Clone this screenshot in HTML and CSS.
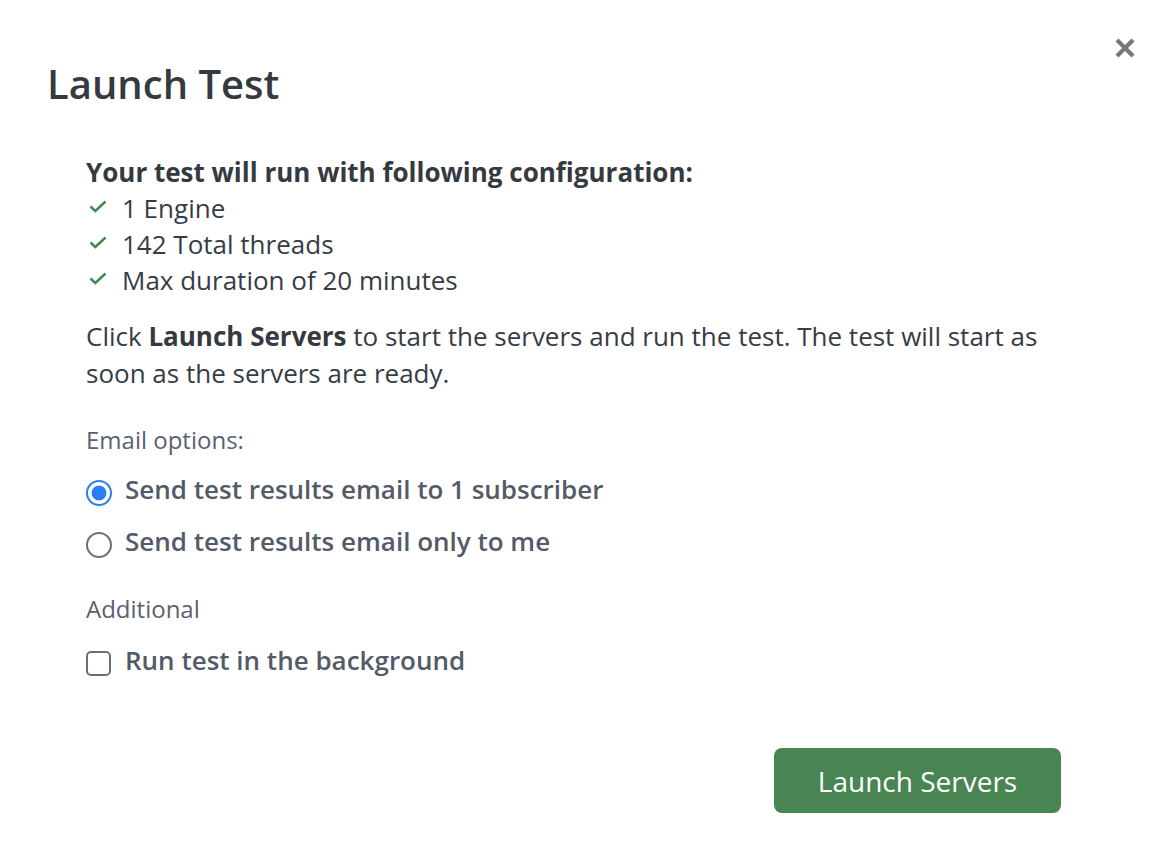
FILE: index.html
```html
<!DOCTYPE html>
<html lang="en">
<head>
<meta charset="utf-8">
<title>Launch Test</title>
<link rel="stylesheet" href="styles.css">
</head>
<body>
<div class="modal">
  <button class="close" aria-label="Close">
    <svg width="22" height="22" viewBox="0 0 22 22"><path d="M3 3 L19 19 M19 3 L3 19" stroke="#777" stroke-width="4.2" stroke-linecap="butt"/></svg>
  </button>
  <h1 class="title">Launch Test</h1>
  <div class="body">
    <div class="config-head">Your test will run with following configuration:</div>
    <ul class="config-list">
      <li><span class="check"><svg width="18" height="13" viewBox="0 0 18 13"><path d="M1.5 6.5 L6.3 11 L16.5 1.5" fill="none" stroke="#3c8a4f" stroke-width="2.4"/></svg></span>1 Engine</li>
      <li><span class="check"><svg width="18" height="13" viewBox="0 0 18 13"><path d="M1.5 6.5 L6.3 11 L16.5 1.5" fill="none" stroke="#3c8a4f" stroke-width="2.4"/></svg></span>142 Total threads</li>
      <li><span class="check"><svg width="18" height="13" viewBox="0 0 18 13"><path d="M1.5 6.5 L6.3 11 L16.5 1.5" fill="none" stroke="#3c8a4f" stroke-width="2.4"/></svg></span>Max duration of 20 minutes</li>
    </ul>
    <p class="desc">Click <strong>Launch Servers</strong> to start the servers and run the test. The test will start as soon as the servers are ready.</p>
    <div class="group-label">Email options:</div>
    <label class="option"><span class="radio checked"></span>Send test results email to 1 subscriber</label>
    <label class="option"><span class="radio"></span>Send test results email only to me</label>
    <div class="group-label additional">Additional</div>
    <label class="option"><span class="checkbox"></span>Run test in the background</label>
  </div>
  <div class="footer">
    <button class="launch">Launch Servers</button>
  </div>
</div>
</body>
</html>
```

FILE: styles.css
```css
* { box-sizing: border-box; }
html, body { margin: 0; padding: 0; background: #fff; }
body {
  font-family: "Open Sans", "Noto Sans", sans-serif;
  color: #343a44;
  width: 1158px;
  height: 842px;
  overflow: hidden;
}
.modal {
  position: relative;
  padding: 58px 0 0 0;
}
.close {
  position: absolute;
  top: 37px;
  left: 1114px;
  width: 22px;
  height: 22px;
  padding: 0;
  border: 0;
  background: none;
  cursor: pointer;
  display: block;
}
.close svg { display: block; }
.title {
  margin: 0 0 0 47px;
  font-size: 40px;
  line-height: 52px;
  font-weight: 600;
  color: #353a40;
}
.body {
  padding: 44px 98px 0 86px;
}
.config-head {
  font-size: 26px;
  line-height: 36px;
  font-weight: 700;
  color: #343a40;
}
.config-list {
  list-style: none;
  margin: 0;
  padding: 0;
}
.config-list li {
  display: flex;
  align-items: center;
  font-size: 26px;
  line-height: 36px;
  color: #363c46;
}
.check {
  display: inline-flex;
  width: 36px;
  padding-left: 3px;
  padding-bottom: 4px;
}
.check svg { display: block; }
.desc {
  margin: 20px 0 0 0;
  font-size: 26px;
  line-height: 37px;
  color: #363c46;
}
.desc strong { font-weight: 700; color: #343a40; }
.group-label {
  margin-top: 33px;
  font-size: 24px;
  line-height: 30px;
  color: #5a6170;
}
.group-label.additional { margin-top: 27px; }
.option {
  display: flex;
  align-items: center;
  height: 52px;
  font-size: 26px;
  font-weight: 600;
  color: #535a68;
}
.group-label + .option { margin-top: 8px; }
.group-label.additional + .option { margin-top: 10px; }
.radio {
  width: 26px;
  height: 26px;
  border-radius: 50%;
  border: 2px solid #6f6f6f;
  margin-right: 13px;
  margin-top: 8px;
  flex: none;
  background: #fff;
}
.radio.checked {
  border: 2.5px solid #2b7df6;
  background: radial-gradient(circle, #2b7df6 0 7px, #fff 7.8px);
}
.checkbox {
  width: 25px;
  height: 25px;
  border-radius: 5px;
  border: 2px solid #6f6f6f;
  margin-right: 14px;
  margin-top: 6px;
  flex: none;
}
.footer {
  display: flex;
  justify-content: flex-end;
  padding: 62px 97px 0 0;
}
.launch {
  width: 287px;
  height: 65px;
  border: 0;
  border-radius: 8px;
  background: #488553;
  color: #fff;
  font-family: "Open Sans", "Noto Sans", sans-serif;
  font-size: 28px;
  font-weight: 400;
  cursor: pointer;
}
```
